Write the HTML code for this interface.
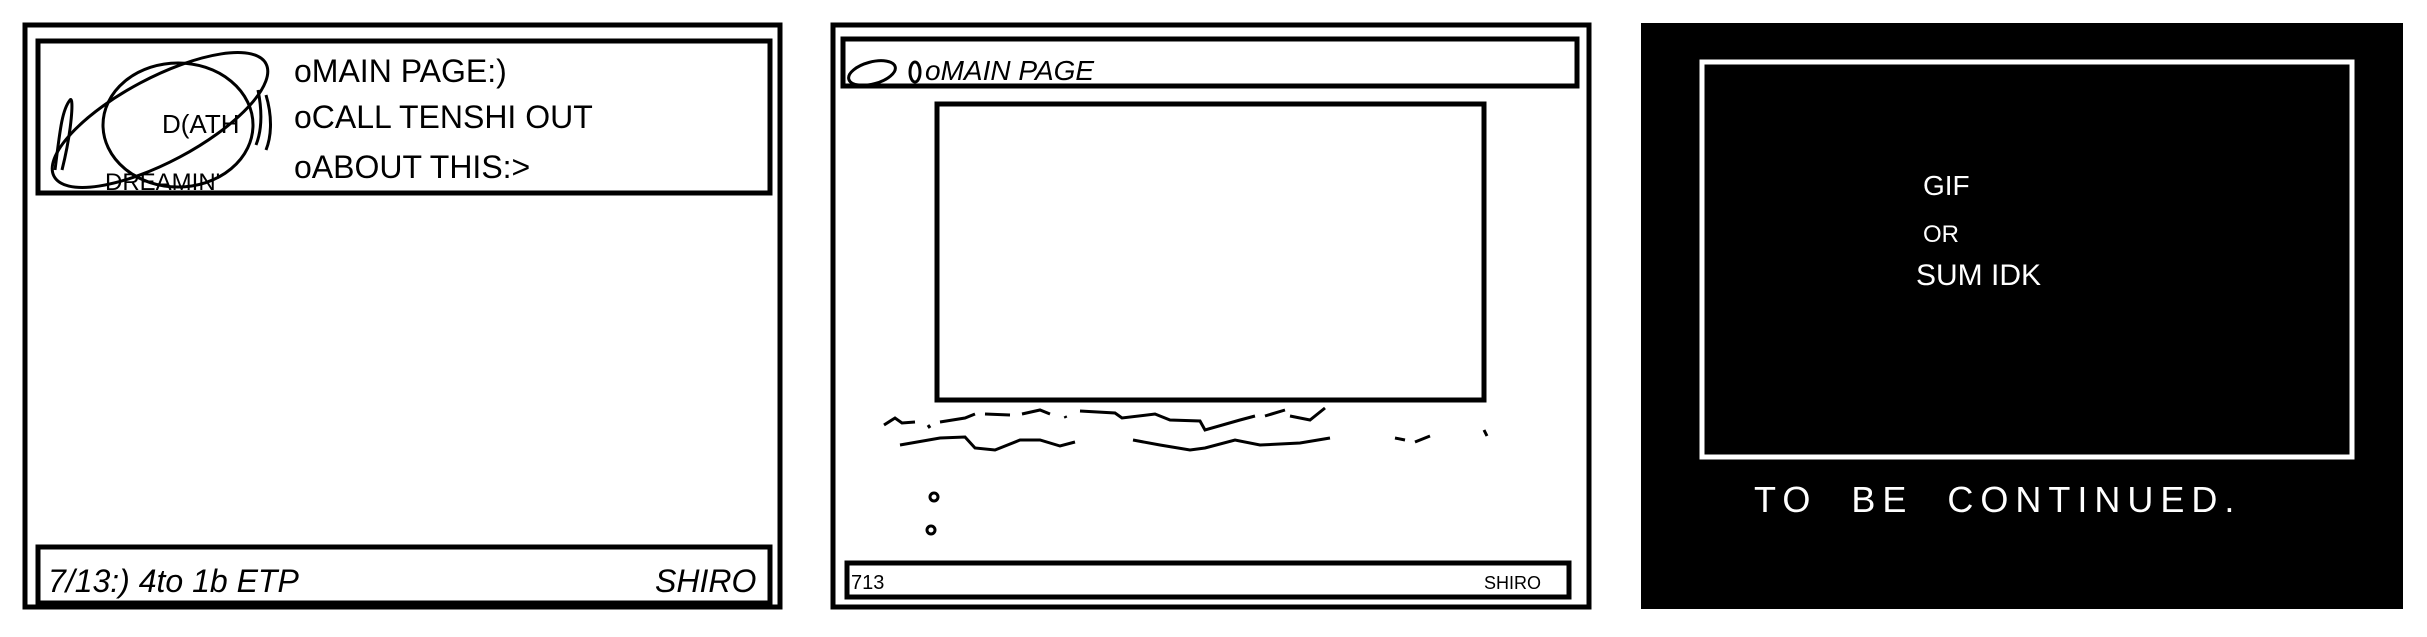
<!DOCTYPE html>
<html><head><meta charset="utf-8"><style>
html,body{margin:0;padding:0;background:#fff;width:2427px;height:637px;overflow:hidden}
svg{display:block}
text{font-family:"Liberation Sans",sans-serif}
</style></head><body>
<svg width="2427" height="637" viewBox="0 0 2427 637" xmlns="http://www.w3.org/2000/svg">
<rect x="0" y="0" width="2427" height="637" fill="#fff"/>
<!-- Panel 1 -->
<rect x="25" y="25" width="755" height="582" fill="none" stroke="#000" stroke-width="5"/>
<rect x="38" y="41" width="732" height="152" fill="none" stroke="#000" stroke-width="5"/>
<rect x="38" y="547" width="732" height="56" fill="none" stroke="#000" stroke-width="5"/>
<g fill="none" stroke="#000" stroke-width="3">
<ellipse cx="160" cy="120" rx="120" ry="42" transform="rotate(-28 160 120)"/>
<ellipse cx="178" cy="125" rx="75" ry="62"/>
<path d="M55 170 C60 130 62 110 70 100 M70 100 C74 95 72 130 62 170 M258 90 C262 110 262 130 256 145 M266 95 C272 115 272 135 266 150"/>
</g>
<text x="162" y="133" font-size="26">D(ATH</text>
<text x="105" y="190" font-size="24">DREAMIN'</text>
<text x="294" y="82" font-size="32">oMAIN PAGE:)</text>
<text x="294" y="128" font-size="32">oCALL TENSHI OUT</text>
<text x="294" y="178" font-size="32">oABOUT THIS:&gt;</text>
<text x="48" y="592" font-size="32" font-style="italic">7/13:) 4to 1b ETP</text>
<text x="655" y="592" font-size="32" font-style="italic">SHIRO</text>
<!-- Panel 2 -->
<rect x="833" y="25" width="756" height="582" fill="none" stroke="#000" stroke-width="5"/>
<rect x="843" y="39" width="734" height="47" fill="none" stroke="#000" stroke-width="5"/>
<rect x="937" y="104" width="547" height="296" fill="none" stroke="#000" stroke-width="5"/>
<rect x="847" y="563" width="722" height="34" fill="none" stroke="#000" stroke-width="5"/>
<g fill="none" stroke="#000" stroke-width="3">
<ellipse cx="872" cy="73" rx="24" ry="11" transform="rotate(-15 872 73)"/>
<ellipse cx="915" cy="72" rx="5" ry="10"/>
<path d="M884 425 L895 418 L902 423 L915 422 M928 425 L930 428 M940 422 L965 418 L975 414 M985 414 L1010 415 M1022 414 L1040 410 L1050 414 M1065 416 L1066 418 M1080 411 L1115 413 L1122 418 L1155 414 L1170 420 L1200 421 L1205 430 L1240 420 L1255 416 M1265 416 L1285 410 M1290 416 L1310 420 L1325 408"/>
<path d="M900 445 L940 438 L965 437 L975 448 L995 450 L1020 440 L1040 440 L1060 446 L1075 442 M1133 440 L1160 445 L1190 450 L1205 448 L1235 440 L1260 445 L1300 443 L1330 438 M1395 438 L1405 440 M1415 442 L1430 436 M1484 430 L1487 436"/>
</g>
<circle cx="934" cy="497" r="4" fill="none" stroke="#000" stroke-width="3"/>
<circle cx="931" cy="530" r="4" fill="none" stroke="#000" stroke-width="3"/>
<text x="925" y="80" font-size="28" font-style="italic">oMAIN PAGE</text>
<text x="851" y="589" font-size="20">713</text>
<text x="1484" y="589" font-size="18">SHIRO</text>
<!-- Panel 3 -->
<rect x="1641" y="23" width="762" height="586" fill="#000"/>
<rect x="1702" y="62" width="650" height="395" fill="none" stroke="#fff" stroke-width="5"/>
<text x="1923" y="195" font-size="28" fill="#fff">GIF</text>
<text x="1923" y="242" font-size="24" fill="#fff">OR</text>
<text x="1916" y="285" font-size="30" fill="#fff">SUM IDK</text>
<text x="1754" y="512" font-size="36" fill="#fff" letter-spacing="7">TO&#160;&#160;BE&#160;&#160;CONTINUED.</text>
</svg>
</body></html>
